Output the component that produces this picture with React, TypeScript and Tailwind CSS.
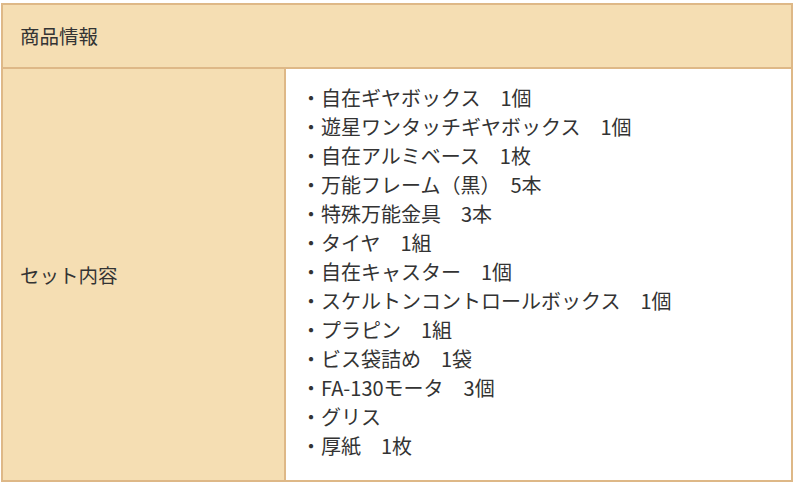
const items = [
  "自在ギヤボックス　1個",
  "遊星ワンタッチギヤボックス　1個",
  "自在アルミベース　1枚",
  "万能フレーム（黒）　5本",
  "特殊万能金具　3本",
  "タイヤ　1組",
  "自在キャスター　1個",
  "スケルトンコントロールボックス　1個",
  "プラピン　1組",
  "ビス袋詰め　1袋",
  "FA-130モータ　3個",
  "グリス",
  "厚紙　1枚",
];

export default function App() {
  return (
    <div
      className="pt-[3px] pl-px bg-white w-[800px] h-[483px] text-[#333] text-[19.5px]"
      style={{ fontFamily: '"Noto Sans CJK JP", "Noto Sans", sans-serif' }}
    >
      <div className="w-[792px] border-2 border-[#deb887] bg-[#f5deb3]">
        <div className="h-[64px] flex items-center px-[17px] border-b-2 border-[#deb887]">
          商品情報
        </div>
        <div className="flex">
          <div className="w-[283px] flex items-center px-[17px] border-r-2 border-[#deb887]">
            セット内容
          </div>
          <div className="flex-1 bg-white pl-[15px] pt-[14px] pb-[20px] text-[20px]">
            <ul>
              {items.map((item) => (
                <li key={item} className="leading-[29px] whitespace-nowrap">
                  ・{item}
                </li>
              ))}
            </ul>
          </div>
        </div>
      </div>
    </div>
  );
}
